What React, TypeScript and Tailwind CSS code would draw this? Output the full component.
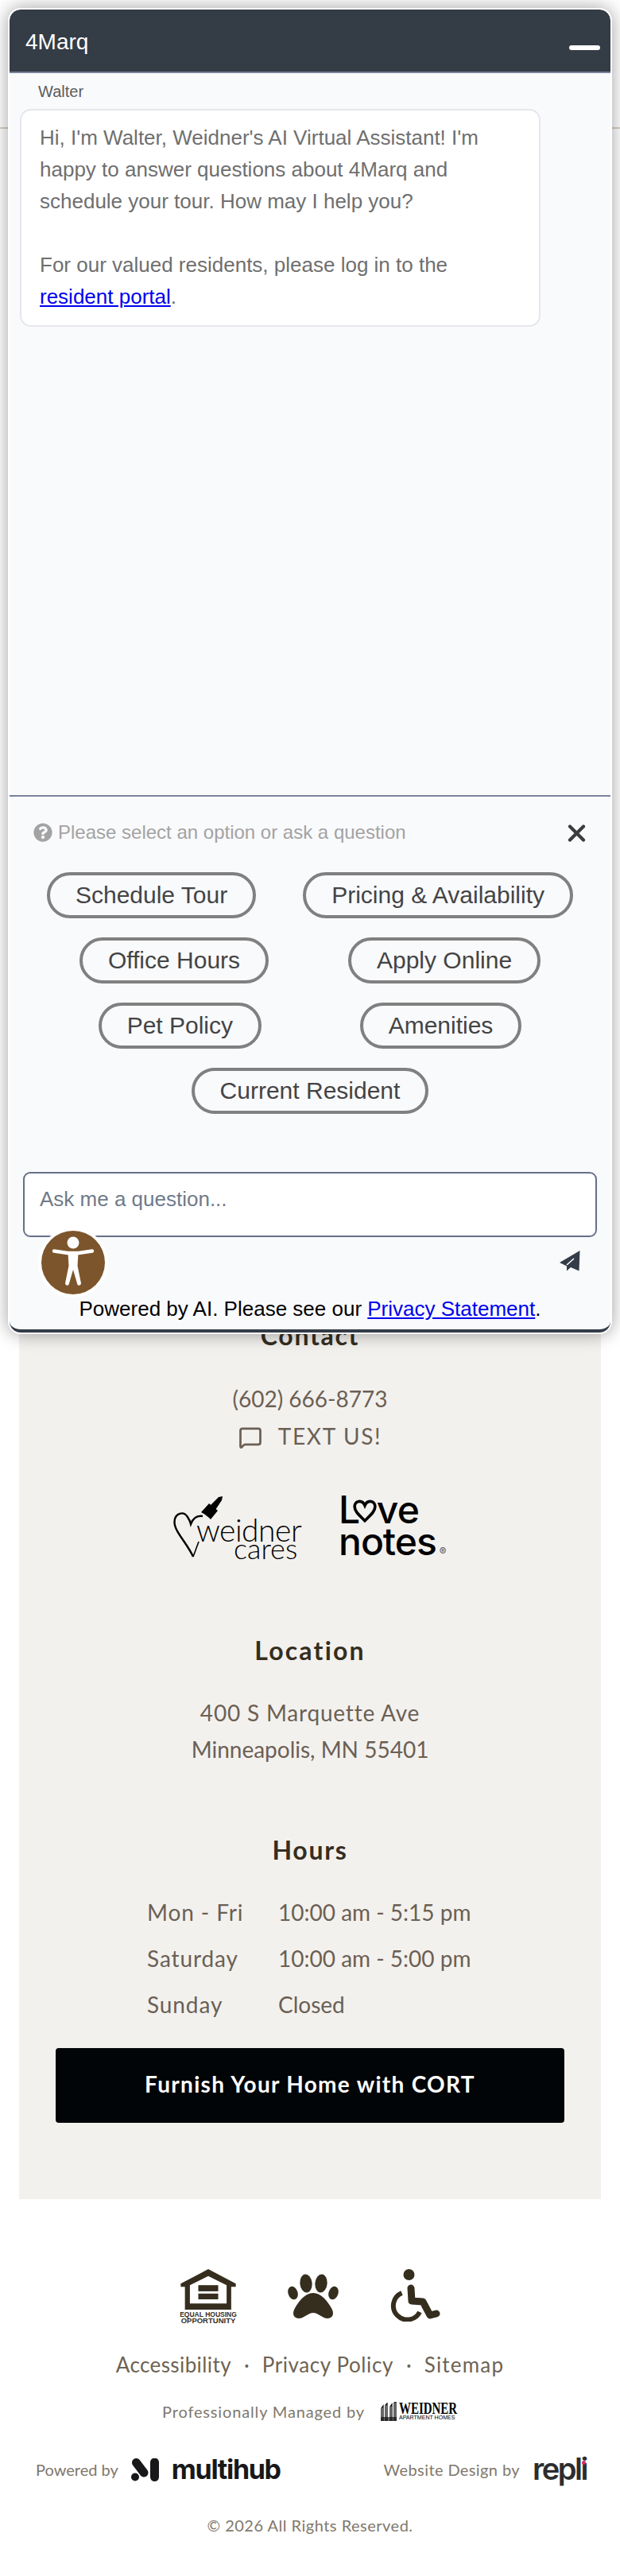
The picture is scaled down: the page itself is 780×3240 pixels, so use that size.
import React from "react";
import { MessageSquare } from "lucide-react";
import { FaQuestionCircle } from "react-icons/fa";

const optionRows = [["Schedule Tour", "Pricing & Availability"], ["Office Hours", "Apply Online"], ["Pet Policy", "Amenities"], ["Current Resident"]];

function AccessIcon() {
  return (
    <svg viewBox="0 0 80 80" className="w-[80px] h-[80px] block">
      <circle cx="40" cy="40" r="40" fill="#7c552c" />
      <circle cx="40" cy="15" r="7.5" fill="#fff" />
      <path d="M16 25.5 L33 28 L47 28 L64 25.5" stroke="#fff" strokeWidth="4.4" strokeLinecap="round" strokeLinejoin="round" fill="none" />
      <path d="M33.5 28 L46.5 28 L45.5 44 L50 66 A2.5 2.5 0 0 1 45.4 67.5 L40 49 L34.6 67.5 A2.5 2.5 0 0 1 30 66 L34.5 44 Z" fill="#fff" />
    </svg>
  );
}

function ChatWidget() {
  return (
    <div className="absolute left-[10px] top-[10px] w-[760px] h-[1668px] rounded-[16px] bg-white p-[2px] shadow-[0_0_22px_rgba(0,0,0,0.38)] font-['Liberation_Sans',Arial,sans-serif]">
      <div className="flex flex-col h-full bg-[#f9fafc] rounded-[14px] border-b-[4px] border-[#333c47] overflow-hidden">
        <div className="flex justify-between h-[80px] shrink-0 bg-[#343c46] border-b-2 border-[#78839c] rounded-t-[14px] pl-[20px] pr-[13px]">
          <span className="text-[28px] leading-[82px] text-white">4Marq</span>
          <span className="mt-[45px] w-[39px] h-[6px] rounded-full bg-white" />
        </div>
        <div className="h-[910px] shrink-0 border-b-2 border-[#78839c]">
          <div className="pl-[36px] pt-[11px] text-[20px] leading-[24px] text-[#5c5c5c]">Walter</div>
          <div className="ml-[13px] mt-[10px] w-[655px] h-[274px] bg-white border-2 border-[#e5e7eb] rounded-[14px] pl-[23px] pt-[14px] text-[26px] leading-[40px] text-[#6f6f6f]">
            Hi, I'm Walter, Weidner's AI Virtual Assistant! I'm<br />
            happy to answer questions about 4Marq and<br />
            schedule your tour. How may I help you?<br />
            <br />
            For our valued residents, please log in to the<br />
            <a className="text-[#0000ee] underline">resident portal</a>.
          </div>
        </div>
        <div className="flex items-center h-[36px] mt-[28px] pl-[30px] pr-[31px] shrink-0">
          <FaQuestionCircle className="w-[24px] h-[24px] -mt-[3px] text-[#a3a3a3]" />
          <span className="ml-[7px] -mt-[3px] text-[24px] text-[#a3a3a3]">Please select an option or ask a question</span>
          <svg viewBox="0 0 23 22" className="ml-auto w-[23px] h-[22px]">
            <path d="M3 2.5 L20 19.5 M20 2.5 L3 19.5" stroke="#3c3c3c" strokeWidth="4.2" strokeLinecap="round" fill="none" />
          </svg>
        </div>
        <div className="-ml-[12px] w-[780px] shrink-0 mt-[31px] flex flex-col gap-y-[24px]">
          {optionRows.map((row) => (
            <div key={row[0]} className="flex justify-evenly">
              {row.map((o) => (
                <button key={o} className="h-[58px] px-[32px] rounded-full border-[4px] border-[#808080] text-[30px] leading-[50px] text-[#444444] whitespace-nowrap">
                  {o}
                </button>
              ))}
            </div>
          ))}
        </div>
        <div className="mx-[17px] mt-[73px] h-[82px] shrink-0 bg-white border-2 border-[#667088] rounded-[9px] pl-[19px] pt-[15px] text-[26px] leading-[34px] text-[#707a89]">
          Ask me a question...
        </div>
        <div className="flex justify-end pr-[38px] mt-[17px] shrink-0">
          <svg viewBox="0 0 26 26" className="w-[26px] h-[26px]">
            <path d="M25.5 0 L0 15 L9 19.5 L9 25.5 L14 21 L24.5 25.5 Z" fill="#333c47" />
            <path d="M9 18 L18 10" stroke="#f9fafc" strokeWidth="1.6" fill="none" />
          </svg>
        </div>
        <div className="mt-[32px] text-center text-[26px] leading-[30px] text-black">
          Powered by AI. Please see our <a className="text-[#0000ee] underline">Privacy Statement</a>.
        </div>
      </div>
    </div>
  );
}

function WeidnerCares() {
  return (
    <div className="relative w-[160px] h-[80px] text-black font-['Lato',sans-serif]">
      <svg viewBox="0 0 160 80" className="absolute inset-0 w-[160px] h-[80px]">
        <path d="M25 78 C17 60 1 46 1.5 34 C2 23 13 20 18 28 C20 31 21 33 22 37 C25 29 30 26 37 27" stroke="#000" strokeWidth="2.4" fill="none" />
        <path d="M25 78 L32 59" stroke="#000" strokeWidth="1.6" fill="none" />
        <path d="M35 22 L45 11 L56 20 L47 31 C44 28 40 25 35 22 Z" fill="#000" />
        <path d="M47 13 L57 3 L62 2 L61 7 L53 19 Z" fill="#000" />
      </svg>
      <div className="absolute left-[29px] top-[21px] text-[39px] leading-[46px] font-light tracking-[-0.5px]">weidner</div>
      <div className="absolute left-[76px] top-[47px] text-[36px] leading-[40px] font-light">cares</div>
    </div>
  );
}

function LoveNotes() {
  return (
    <div className="w-[136px] h-[80px] text-black font-['Inter',sans-serif] font-medium">
      <div className="flex items-end h-[37px] text-[48px] leading-[37px] tracking-[-0.5px]">
        <span>L</span>
        <svg viewBox="0 0 28 28" className="w-[30px] h-[30px] -ml-[9px] mb-[1px]">
          <path d="M14 25 C7 18 2 14 2 8.5 C2 1 11 0 14 7 C17 0 26 1 26 8.5 C26 14 21 18 14 25 Z" stroke="#000" strokeWidth="3.4" fill="none" />
        </svg>
        <span>ve</span>
      </div>
      <div className="flex items-end h-[43px] text-[48px] leading-[43px] tracking-[-1px] whitespace-nowrap">
        notes<span className="ml-[4px] mb-[2px] text-[13px] leading-[13px] tracking-normal text-[#555555]">®</span>
      </div>
    </div>
  );
}

function EqualHousing() {
  return (
    <div className="flex flex-col items-center w-[72px] h-[69px] text-[#352e1f]">
      <svg viewBox="0 0 72 53" className="w-[72px] h-[53px] block">
        <path fillRule="evenodd" fill="#352e1f" d="M36 0 L72 19 L72 23 L66 23 L66 53 L5.5 53 L5.5 23 L0 23 L0 19 Z M36 9 L12 21 L12 45 L60 45 L60 21 Z" />
        <rect x="23" y="21" width="26" height="8" fill="#352e1f" />
        <rect x="23" y="32" width="26" height="7.5" fill="#352e1f" />
      </svg>
      <div className="mt-[2px] font-['Liberation_Sans',sans-serif] font-bold text-[8.5px] leading-[8px] text-center whitespace-nowrap">
        EQUAL HOUSING<br />
        <span className="text-[9.5px]">OPPORTUNITY</span>
      </div>
    </div>
  );
}

function Paw() {
  return (
    <svg viewBox="0 0 64 56" className="w-[64px] h-[56px] mt-[6px] shrink-0">
      <g fill="#352e1f">
        <ellipse cx="6.5" cy="24" rx="6" ry="8.5" transform="rotate(-18 6.5 24)" />
        <ellipse cx="23" cy="12" rx="7.6" ry="11.5" transform="rotate(-5 23 12)" />
        <ellipse cx="42" cy="12" rx="7.6" ry="11.5" transform="rotate(5 42 12)" />
        <ellipse cx="57.5" cy="24" rx="6" ry="8.5" transform="rotate(18 57.5 24)" />
        <path d="M32 24 C22 24 14 34 8.5 44 C5 51 8 56 14 56 C20 56 26 49 32 49 C38 49 44 56 50 56 C56 56 59 51 55.5 44 C50 34 42 24 32 24 Z" />
      </g>
    </svg>
  );
}

function Wheelchair() {
  return (
    <svg viewBox="0 0 64 66" className="w-[64px] h-[66px] shrink-0">
      <circle cx="24.5" cy="7" r="7" fill="#352e1f" />
      <path d="M27 24 L28 40 L42 41 L51 58 L59 56" stroke="#352e1f" strokeWidth="9" strokeLinecap="round" strokeLinejoin="round" fill="none" />
      <path d="M15.5 30 A17.5 17.5 0 1 0 38 54" stroke="#352e1f" strokeWidth="6" fill="none" />
    </svg>
  );
}

function WeidnerLogo() {
  return (
    <div className="flex items-center h-[24px] ml-[20px] w-[97px] text-black tracking-normal">
      <svg viewBox="0 0 20 24" className="w-[20px] h-[24px] shrink-0">
        <path d="M1 24 L1 8 L3 5 L3 24 M6 24 L6 4 L8 2 L8 24 M12 24 L12 6 L14 3 L14 24 M17 24 L17 1 L19 0 L19 24" stroke="#000" strokeWidth="1.2" fill="none" />
        <path d="M0 19 L20 19 L20 24 L0 24 Z" fill="#000" opacity="0.6" />
      </svg>
      <div className="ml-[3px] w-[74px] text-left">
        <div className="origin-left scale-x-[0.68] font-['Liberation_Serif',serif] font-bold text-[22px] leading-[15px] whitespace-nowrap">WEIDNER</div>
        <div className="origin-left scale-x-[0.88] font-['Liberation_Sans',sans-serif] text-[8px] leading-[9px] whitespace-nowrap">APARTMENT HOMES</div>
      </div>
    </div>
  );
}

function Multihub() {
  return (
    <div className="flex items-center ml-[16px] h-[32px] text-[#18181a] tracking-normal">
      <svg viewBox="0 0 36 29" className="w-[36px] h-[29px]">
        <path d="M6.5 5.5 L16 18" stroke="#18181a" strokeWidth="11" strokeLinecap="round" fill="none" />
        <path d="M29.5 5 L29.5 23.5" stroke="#18181a" strokeWidth="11" strokeLinecap="round" fill="none" />
        <circle cx="5" cy="23.5" r="5" fill="#18181a" />
      </svg>
      <span className="ml-[15px] font-['Inter',sans-serif] font-bold text-[34px] leading-[32px] tracking-[-1.3px]">multihub</span>
    </div>
  );
}

function Repli() {
  return (
    <div className="relative ml-[16px] w-[67px] h-[32px] font-['Inter',sans-serif] font-semibold text-[#2d2d2f] text-[38px] leading-[30px] tracking-[-2.5px]">
      repli
      <span className="absolute right-0 top-[5px] w-[5px] h-[5px] rounded-full bg-[#d1325f]" />
    </div>
  );
}

export default function App() {
  return (
    <div className="relative w-[780px] h-[3240px] bg-white overflow-hidden font-['Lato',sans-serif]">
      <div className="h-[162px] border-b-2 border-[#d9d0c4]" />
      <div className="mx-[24px] mt-[1478px] pb-[96px] bg-[#f3f1ee] text-center text-[#6b6054]">
        <h2 className="pt-[20px] text-[32px] leading-[40px] font-bold tracking-[1.7px] text-[#352e1f]">Contact</h2>
        <div className="mt-[39px] text-[28px] leading-[40px] tracking-normal">(602) 666-8773</div>
        <div className="mt-[7px] h-[40px] flex justify-center items-center gap-[20px] text-[28px] leading-[40px] tracking-[1.7px]">
          <MessageSquare className="w-[30px] h-[30px] mt-[4px]" strokeWidth={2.2} />
          <span>TEXT US!</span>
        </div>
        <div className="mt-[54px] flex justify-center gap-[48px]">
          <WeidnerCares />
          <LoveNotes />
        </div>
        <h2 className="mt-[96px] text-[32px] leading-[40px] font-bold tracking-[2.2px] text-[#352e1f]">Location</h2>
        <div className="mt-[35px] text-[28px] leading-[46px]">
          <div className="tracking-[0.8px]">400 S Marquette Ave</div>
          <div className="tracking-normal">Minneapolis, MN 55401</div>
        </div>
        <h2 className="mt-[84px] text-[32px] leading-[40px] font-bold tracking-[1.7px] text-[#352e1f]">Hours</h2>
        <div className="mt-[29px] pl-[161px] grid grid-cols-[165px_1fr] auto-rows-[58px] items-center text-left text-[28px]">
          <span className="tracking-[0.9px]">Mon - Fri</span>
          <span className="tracking-normal">10:00 am - 5:15 pm</span>
          <span className="tracking-[0.9px]">Saturday</span>
          <span className="tracking-normal">10:00 am - 5:00 pm</span>
          <span className="tracking-[0.9px]">Sunday</span>
          <span className="tracking-normal">Closed</span>
        </div>
        <div className="mx-[46px] mt-[26px] h-[94px] rounded-[4px] bg-[#020507] text-white text-[28px] leading-[90px] font-bold tracking-[1.3px]">
          Furnish Your Home with CORT
        </div>
      </div>
      <footer className="text-center">
        <div className="mt-[88px] h-[69px] flex justify-center">
          <div className="flex w-[328px] justify-between">
            <EqualHousing />
            <Paw />
            <Wheelchair />
          </div>
        </div>
        <div className="mt-[31px] flex justify-center gap-[16px] text-[26px] leading-[40px] text-[#6e6353]">
          <span className="tracking-[0.4px]">Accessibility</span>
          <span>·</span>
          <span className="tracking-[0.6px]">Privacy Policy</span>
          <span>·</span>
          <span className="tracking-[1.2px]">Sitemap</span>
        </div>
        <div className="mt-[24px] h-[30px] flex justify-center items-center text-[20px] tracking-[0.85px] text-[#80786c]">
          <span>Professionally Managed by</span>
          <WeidnerLogo />
        </div>
        <div className="mt-[42px] h-[32px] flex items-center justify-between pl-[45px] pr-[43px] text-[20px] text-[#80786c]">
          <div className="flex items-center">
            <span>Powered by</span>
            <Multihub />
          </div>
          <div className="flex items-center">
            <span className="tracking-[0.4px]">Website Design by</span>
            <Repli />
          </div>
        </div>
        <div className="mt-[39px] text-[20px] leading-[30px] tracking-[0.5px] text-[#80786c]">© 2026 All Rights Reserved.</div>
      </footer>
      <ChatWidget />
      <div className="absolute left-[48px] top-[1544px] rounded-full border-[4px] border-white bg-white">
        <AccessIcon />
      </div>
    </div>
  );
}
